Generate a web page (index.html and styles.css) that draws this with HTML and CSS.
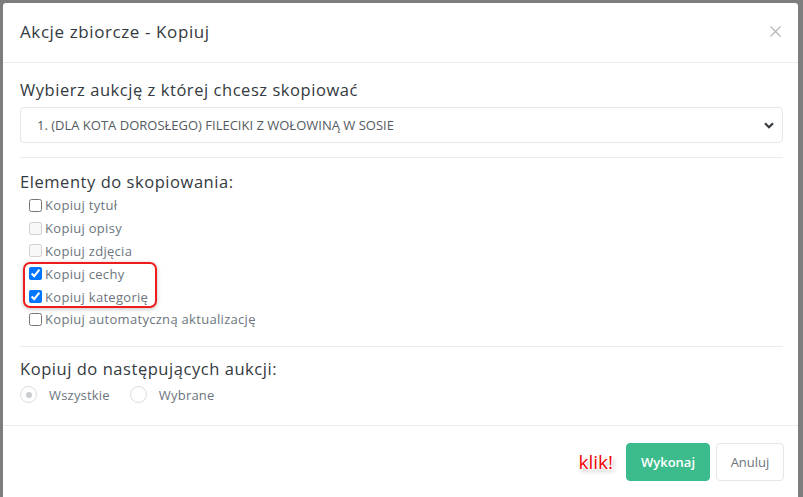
FILE: index.html
```html
<!DOCTYPE html>
<html lang="pl">
<head>
<meta charset="utf-8">
<title>Akcje zbiorcze - Kopiuj</title>
<link rel="stylesheet" href="styles.css">
</head>
<body>
<div class="modal">
  <div class="modal-header">
    <h5 class="modal-title">Akcje zbiorcze - Kopiuj</h5>
    <svg class="close" width="11" height="11" viewBox="0 0 11 11"><path d="M0.5 0.5 L10.5 10.5 M10.5 0.5 L0.5 10.5" stroke="#b5b5b5" stroke-width="1.2" fill="none"/></svg>
  </div>
  <div class="modal-body">
    <div class="label first">Wybierz aukcję z której chcesz skopiować</div>
    <div class="select">
      <span>1. (DLA KOTA DOROSŁEGO) FILECIKI Z WOŁOWINĄ W SOSIE</span>
      <svg width="10" height="7" viewBox="0 0 10 7"><path d="M1 1.2 L5 5.2 L9 1.2" stroke="#343a40" stroke-width="2.2" fill="none"/></svg>
    </div>
    <hr class="sep sep1">
    <div class="label">Elementy do skopiowania:</div>
    <div class="checks">
      <label class="check"><input type="checkbox">Kopiuj tytuł</label>
      <label class="check"><input type="checkbox" disabled>Kopiuj opisy</label>
      <label class="check"><input type="checkbox" disabled>Kopiuj zdjęcia</label>
      <div class="highlight">
        <label class="check"><input type="checkbox" checked>Kopiuj cechy</label>
        <label class="check"><input type="checkbox" checked>Kopiuj kategorię</label>
      </div>
      <label class="check"><input type="checkbox">Kopiuj automatyczną aktualizację</label>
    </div>
    <hr class="sep sep2">
    <div class="label second">Kopiuj do następujących aukcji:</div>
    <div class="radios">
      <span class="radio checked"></span><span class="radio-text">Wszystkie</span>
      <span class="radio"></span><span class="radio-text">Wybrane</span>
    </div>
  </div>
  <div class="modal-footer">
    <span class="klik">klik!</span>
    <button class="btn btn-success">Wykonaj</button>
    <button class="btn btn-light">Anuluj</button>
  </div>
</div>
</body>
</html>
```

FILE: styles.css
```css
html, body {
  margin: 0;
  padding: 0;
  height: 100%;
}
body {
  background: #7d7d7d;
  font-family: "Open Sans", "Noto Sans", sans-serif;
  overflow: hidden;
}
.modal {
  margin: 3px 5px 0 3px;
  background: #fff;
  height: calc(100% - 3px);
  border-radius: 3px 3px 0 0;
}
.modal-header {
  height: 59px;
  display: flex;
  align-items: center;
  justify-content: space-between;
  padding: 0 17px 0 17px;
  border-bottom: 1px solid #e9ebef;
}
.modal-title {
  margin: 0;
  font-size: 17px;
  font-weight: 400;
  letter-spacing: 0.6px;
  color: #343a40;
  padding-bottom: 2px;
}
.close {
  margin-top: -3px;
}
.modal-body {
  padding: 15px 15px 18px 17px;
}
.label {
  font-size: 16.5px;
  line-height: 24px;
  letter-spacing: 0.55px;
  color: #343a40;
  margin-top: 12px;
}
.label.first { margin-top: 0; }
.label.second { margin-top: 10px; }
.select {
  margin-top: 5px;
  height: 34px;
  border: 1px solid #e3e6ea;
  border-radius: 4px;
  display: flex;
  align-items: center;
  justify-content: space-between;
  padding: 0 8px 0 16px;
  font-size: 13px;
  color: #545b62;
}
.sep {
  border: 0;
  border-top: 1px solid #e9ebef;
  margin: 0;
}
.sep1 { margin-top: 14px; }
.sep2 { margin-top: 15px; }
.checks {
  padding-left: 5px;
}
.check {
  display: flex;
  align-items: center;
  height: 22.8px;
  font-size: 13px;
  letter-spacing: 0.3px;
  color: #6c757d;
}
.check input {
  margin: 0 3px 0 4px;
  width: 13px;
  height: 13px;
}
.highlight {
  position: relative;
}
.highlight::after {
  content: "";
  position: absolute;
  top: 0;
  bottom: 0;
  left: -2px;
  width: 134px;
  border: 2px solid #ee1c1c;
  border-radius: 7px;
  box-sizing: border-box;
  box-shadow: 0 1px 4px rgba(0,0,0,0.25);
}
.radios {
  display: flex;
  align-items: center;
  height: 24px;
  margin-top: 2px;
}
.radio {
  width: 15px;
  height: 15px;
  border: 1px solid #d9dde1;
  border-radius: 50%;
  display: inline-flex;
  align-items: center;
  justify-content: center;
}
.radio.checked::after {
  content: "";
  width: 6px;
  height: 6px;
  border-radius: 50%;
  background: #c8cbcf;
}
.radio-text {
  font-size: 13px;
  letter-spacing: 0.2px;
  color: #6c757d;
  margin-left: 12px;
  margin-right: 20px;
}
.modal-footer {
  border-top: 1px solid #e9ebef;
  display: flex;
  justify-content: flex-end;
  align-items: center;
  padding: 17px 14px 0 0;
}
.klik {
  font-size: 19px;
  color: #f00000;
  margin-right: 13px;
  text-shadow: 1px 1px 0 #fff, -1px -1px 0 #fff, 1px -1px 0 #fff, -1px 1px 0 #fff, 2px 3px 4px rgba(0,0,0,0.35);
}
.btn {
  font-family: inherit;
  height: 38px;
  border-radius: 4px;
  font-size: 13px;
  padding: 0;
  cursor: pointer;
}
.btn-success {
  width: 84px;
  background: #3cbc8c;
  border: 1px solid #3cbc8c;
  color: #fff;
  font-weight: 600;
  margin-right: 6px;
}
.btn-light {
  width: 68px;
  background: #fff;
  border: 1px solid #e3e6ea;
  color: #6c757d;
}
```
